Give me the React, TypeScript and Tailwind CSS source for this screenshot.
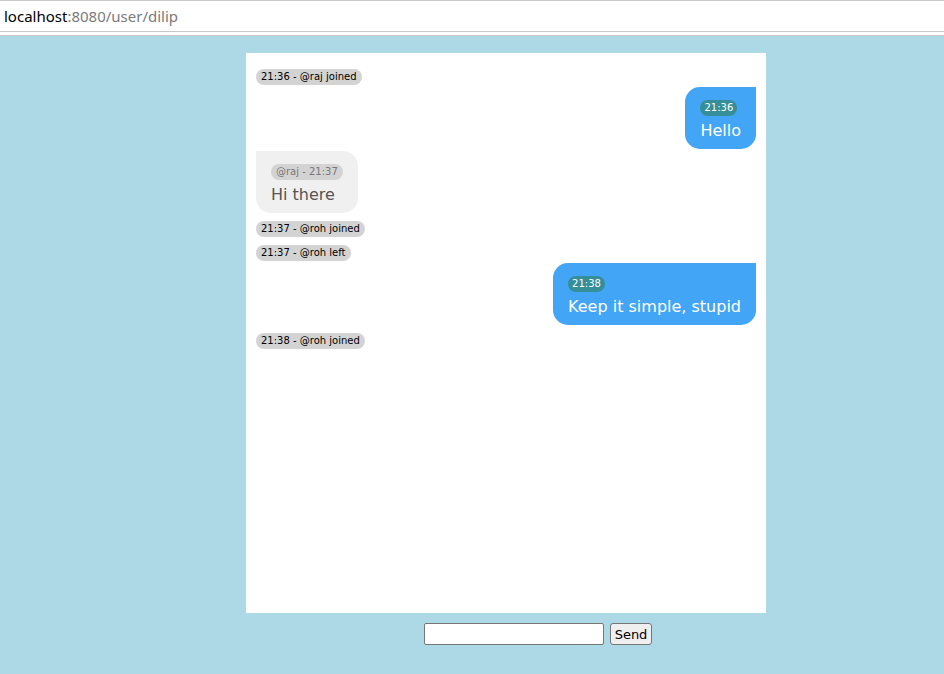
import React from 'react';

type Item =
  | { kind: 'notice'; text: string }
  | { kind: 'mine'; time: string; text: string }
  | { kind: 'theirs'; meta: string; text: string };

const items: Item[] = [
  { kind: 'notice', text: '21:36 - @raj joined' },
  { kind: 'mine', time: '21:36', text: 'Hello' },
  { kind: 'theirs', meta: '@raj - 21:37', text: 'Hi there' },
  { kind: 'notice', text: '21:37 - @roh joined' },
  { kind: 'notice', text: '21:37 - @roh left' },
  { kind: 'mine', time: '21:38', text: 'Keep it simple, stupid' },
  { kind: 'notice', text: '21:38 - @roh joined' },
];

const font = { fontFamily: '"DejaVu Sans", sans-serif' };

const App: React.FC = () => {
  const [text, setText] = React.useState('');

  return (
    <div className="w-[944px] h-[674px] bg-[#add8e6] overflow-hidden" style={font}>
      {/* address bar */}
      <div className="bg-white border-t border-[#c8c8c8]">
        <div className="h-[31px] flex items-center pl-[4px] text-[15px] border-b border-[#c8c8c8]" style={{ fontFamily: '"Noto Sans", sans-serif' }}>
          <span className="text-black">localhost</span>
          <span className="text-[#7a7a7a]">:8080/user/dilip</span>
        </div>
        <div className="h-[4px] border-b border-[#c8c8c8]" />
      </div>

      {/* chat panel */}
      <div className="ml-[246px] mt-[17px] w-[520px] h-[560px] bg-white px-[10px] pt-[8px] flex flex-col">
        {items.map((item, i) => {
          if (item.kind === 'notice') {
            return (
              <div key={i} className="mt-2 flex">
                <span className="bg-[#d3d3d3] rounded-full px-[5px] h-[16px] leading-[16px] text-[10px] text-black">
                  {item.text}
                </span>
              </div>
            );
          }
          if (item.kind === 'mine') {
            return (
              <div key={i} className="mt-[2px] flex justify-end">
                <div className="flex flex-col items-start bg-[#42a5f5] rounded-[15px] rounded-tr-none px-[15px] pt-[13px] pb-[9px] text-white">
                  <span className="bg-[#368e98] rounded-full px-[4px] h-[16px] leading-[16px] text-[10px]">
                    {item.time}
                  </span>
                  <div className="text-[16px] leading-[19px] mt-[5px]">{item.text}</div>
                </div>
              </div>
            );
          }
          return (
            <div key={i} className="mt-[2px] flex justify-start">
              <div className="flex flex-col items-start bg-[#f0f0f0] rounded-[15px] rounded-tl-none px-[15px] pt-[13px] pb-[9px] text-[#555555]">
                <span className="bg-[#d3d3d3] rounded-full px-[5px] h-[16px] leading-[16px] text-[10px] text-[#777777]">
                  {item.meta}
                </span>
                <div className="text-[16px] leading-[19px] mt-[5px]">{item.text}</div>
              </div>
            </div>
          );
        })}
      </div>

      {/* send form */}
      <div className="flex items-center gap-[6px] ml-[424px] mt-[10px]">
        <input
          value={text}
          onChange={(e) => setText(e.target.value)}
          className="w-[180px] h-[22px] bg-white border border-[#767676] rounded-[2px] px-1 text-[13px]"
        />
        <button className="h-[22px] w-[42px] bg-[#efefef] border border-[#767676] rounded-[3px] text-[13px] text-black leading-none">
          Send
        </button>
      </div>
    </div>
  );
};

export default App;
